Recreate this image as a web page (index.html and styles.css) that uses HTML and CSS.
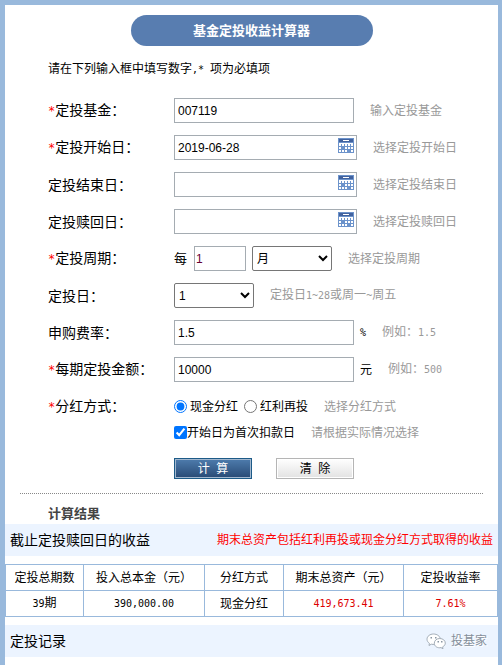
FILE: index.html
```
<!DOCTYPE html>
<html lang="zh-CN">
<head>
    <meta charset="UTF-8">
    <meta name="viewport" content="width=device-width, initial-scale=1.0">
    <title>基金定投收益计算器</title>
    <link rel="stylesheet" href="styles.css">
</head>
<body>
<svg class="sprite" aria-hidden="true">
    <symbol id="calendar" viewBox="0 0 16 15">
        <path fill="#6c93cb" d="M0 0h16v15H0z"/>
        <path fill="#41629f" d="M1 1h14v3H1z"/>
        <path fill="#fff" d="M5 2h6v1H5zM1 5h14v1H1zM1 6h2v2H1zM4 6h2v2H4zM7 6h2v2H7zM10 6h2v2h-2zM13 6h2v2h-2zM1 9h2v2H1zM7 9h2v2H7zM10 9h2v2h-2zM13 9h2v2h-2zM1 12h2v2H1zM4 12h2v2H4zM7 12h2v2H7zM13 12h2v2h-2z"/>
    </symbol>
</svg>
<div class="container">
    <h1>基金定投收益计算器</h1>
    <form id="calcForm">
        <p class="intro">请在下列输入框中填写数字<span class="num">,*&nbsp;</span>项为必填项</p>
        <div class="form-group">
            <label class="name" for="fund"><span class="star">*</span>定投基金：</label>
            <input type="text" id="fund" class="text" value="007119">
            <span class="hint">输入定投基金</span>
        </div>
        <div class="form-group">
            <label class="name" for="start"><span class="star">*</span>定投开始日：</label>
            <div class="date">
                <input type="text" id="start" class="text" value="2019-06-28">
                <button type="button" class="pick" aria-label="选择日期"><svg><use href="#calendar"/></svg></button>
            </div>
            <span class="hint">选择定投开始日</span>
        </div>
        <div class="form-group">
            <label class="name" for="end">定投结束日：</label>
            <div class="date">
                <input type="text" id="end" class="text">
                <button type="button" class="pick" aria-label="选择日期"><svg><use href="#calendar"/></svg></button>
            </div>
            <span class="hint">选择定投结束日</span>
        </div>
        <div class="form-group">
            <label class="name" for="redeem">定投赎回日：</label>
            <div class="date">
                <input type="text" id="redeem" class="text">
                <button type="button" class="pick" aria-label="选择日期"><svg><use href="#calendar"/></svg></button>
            </div>
            <span class="hint">选择定投赎回日</span>
        </div>
        <div class="form-group">
            <label class="name" for="cycle"><span class="star">*</span>定投周期：</label>
            <span class="every">每</span>
            <input type="text" id="cycle" class="text short" value="1">
            <select aria-label="周期单位">
                <option>月</option>
                <option>周</option>
            </select>
            <span class="hint">选择定投周期</span>
        </div>
        <div class="form-group">
            <label class="name" for="day">定投日：</label>
            <select id="day">
                <option>1</option>
                <option>2</option>
                <option>3</option>
            </select>
            <span class="hint">定投日<span class="num">1~28</span>或周一<span class="num">~</span>周五</span>
        </div>
        <div class="form-group">
            <label class="name" for="rate">申购费率：</label>
            <input type="text" id="rate" class="text" value="1.5">
            <span class="unit num">%</span>
            <span class="hint">例如：<span class="num">1.5</span></span>
        </div>
        <div class="form-group">
            <label class="name" for="amount"><span class="star">*</span>每期定投金额：</label>
            <input type="text" id="amount" class="text" value="10000">
            <span class="unit">元</span>
            <span class="hint">例如：<span class="num">500</span></span>
        </div>
        <div class="form-group">
            <span class="name"><span class="star">*</span>分红方式：</span>
            <label class="radio"><input type="radio" name="bonus" checked>现金分红</label>
            <label class="radio"><input type="radio" name="bonus">红利再投</label>
            <span class="hint">选择分红方式</span>
        </div>
        <div class="form-group check-row">
            <label class="check"><input type="checkbox" checked>开始日为首次扣款日</label>
            <span class="hint">请根据实际情况选择</span>
        </div>
        <div class="button-group">
            <button type="submit" class="btn primary">计&nbsp; 算</button>
            <button type="reset" class="btn">清&nbsp; 除</button>
        </div>
    </form>

    <h2>计算结果</h2>
    <div class="band">
        <h3>截止定投赎回日的收益</h3>
        <span class="note">期末总资产包括红利再投或现金分红方式取得的收益</span>
    </div>
    <table>
        <colgroup>
            <col class="col-count">
            <col class="col-cost">
            <col class="col-type">
            <col class="col-total">
            <col>
        </colgroup>
        <thead>
        <tr>
            <th>定投总期数</th>
            <th>投入总本金（元）</th>
            <th>分红方式</th>
            <th>期末总资产（元）</th>
            <th>定投收益率</th>
        </tr>
        </thead>
        <tbody>
        <tr>
            <td><span class="num">39</span>期</td>
            <td><span class="num">390,000.00</span></td>
            <td>现金分红</td>
            <td class="red"><span class="num">419,673.41</span></td>
            <td class="red"><span class="num">7.61%</span></td>
        </tr>
        </tbody>
    </table>
    <div class="band">
        <h3>定投记录</h3>
        <div class="brand">
            <svg viewBox="0 0 20 17" aria-hidden="true">
                <path fill="#fff" stroke="#a3adb8" d="M7.500 1C3.900 1 1 3.300 1 6.200c0 1.700.9 3.100 2.400 4.100L3 12.500l2.300-1.300c4.900 1.100 9-1.300 9-5C14.300 3.300 11.100 1 7.500 1z"/>
                <path fill="#fff" stroke="#a3adb8" d="M13.800 5.500c-3.100 0-5.500 2-5.500 4.700 0 3.200 3.300 5.200 6.700 4.400l2 1.200-.4-1.900c1.700-.9 2.700-2.200 2.700-3.800 0-2.600-2.500-4.600-5.500-4.600z"/>
                <path fill="#8b97a4" d="M4.500 4h1.500v1.500H4.500zM9 4h1.500v1.500H9zM11.500 8H13v1.500h-1.500zM15 8h1.500v1.500H15z"/>
            </svg>
            <span>投基家</span>
        </div>
    </div>
</div>

<script>
    document.getElementById('calcForm').addEventListener('submit', function (e) {
        e.preventDefault();
    });
</script>
</body>
</html>
```
FILE: styles.css
```
:root {
    --frame-color: #99b9dc;
    --title-color: #587db0;
    --band-color: #ecf4ff;
    --hint-color: #999;
    --field-border: #a5acb2;
}

* {
    box-sizing: border-box;
}

body {
    margin: 0;
    font-family: "Liberation Sans", "Noto Sans CJK SC", sans-serif;
    font-size: 12px;
    line-height: 16px;
    color: #000;
    background-color: #fff;
}

.sprite {
    display: none;
}

.container {
    min-height: 100vh;
    padding-top: 10px;
    border: solid var(--frame-color);
    border-width: 5px 4px 0 5px;
}

h1 {
    width: 242px;
    margin: 0 auto;
    font-size: 13px;
    line-height: 31px;
    text-align: center;
    color: #fff;
    background-color: var(--title-color);
    border-radius: 16px;
}

form {
    display: flex;
    flex-direction: column;
    gap: 12px;
    margin: 0 15px;
    padding: 15px 0 14px 28px;
    border-bottom: 1px dotted #888;
}

.intro {
    margin: 0 0 8px;
}

.num {
    font-family: "DejaVu Sans Mono", monospace;
    font-size: 10px;
}

.form-group {
    display: flex;
    align-items: center;
    height: 25px;
    white-space: nowrap;
}

.name {
    width: 126px;
    font-size: 14px;
}

.star {
    font-family: "DejaVu Sans Mono", monospace;
    font-size: 12px;
    color: #f00;
}

.text {
    width: 180px;
    height: 25px;
    padding: 0 3px;
    font-family: "Liberation Sans", sans-serif;
    font-size: 12px;
    border: 1px solid var(--field-border);
}

.date {
    position: relative;
}

.date .text {
    display: block;
    width: 183px;
    padding-right: 20px;
}

.pick {
    position: absolute;
    top: 3px;
    right: 3px;
    width: 16px;
    height: 15px;
    padding: 0;
    border: none;
    background: none;
    cursor: pointer;
}

.pick svg {
    display: block;
    width: 16px;
    height: 15px;
    shape-rendering: crispEdges;
}

.every {
    width: 20px;
    font-size: 13px;
}

.text.short {
    width: 52px;
    margin-right: 6px;
    padding: 0 1px;
    color: #603;
}

select {
    width: 80px;
    height: 25px;
    padding: 0;
    font-family: "Liberation Sans", "Noto Sans CJK SC", sans-serif;
    font-size: 12px;
    color: #000;
    background-color: #fff;
    border: 1px solid #767676;
    border-radius: 2px;
}

.hint {
    margin-left: 16px;
    color: var(--hint-color);
}

.unit {
    margin-left: 6px;
}

.radio,
.check {
    display: flex;
    align-items: center;
}

.radio input {
    width: 13px;
    height: 13px;
    margin: 0 3px 0 0;
}

.radio + .radio {
    margin-left: 6px;
}

.check input {
    width: 13px;
    height: 13px;
    margin: 0;
}

.check-row {
    height: 13px;
    margin-left: 126px;
    margin-top: -5px;
}

.button-group {
    display: flex;
    gap: 24px;
    margin: 7px 0 0 126px;
}

.btn {
    width: 78px;
    height: 21px;
    padding: 0;
    font-family: "Liberation Sans", "Noto Sans CJK SC", sans-serif;
    font-size: 12px;
    line-height: 16px;
    color: #000;
    background: linear-gradient(#fff, #e2e2e2);
    border: 1px solid #b5b5b5;
    box-shadow: inset 0 0 0 1px #fff;
    cursor: pointer;
}

.btn.primary {
    color: #fff;
    background: linear-gradient(#4e7cad, #284a75);
    border-color: #1d5b88;
    box-shadow: inset 0 0 0 1px #a3b8cf;
}

h2 {
    margin: 0;
    padding: 10px 0 0 43px;
    font-size: 13px;
    line-height: 20px;
    color: #444;
}

.band {
    display: flex;
    align-items: center;
    justify-content: space-between;
    height: 32px;
    padding: 0 5px;
    white-space: nowrap;
    background-color: var(--band-color);
}

h3 {
    margin: 0;
    font-size: 14px;
    font-weight: normal;
}

.note {
    color: #f00;
}

table {
    width: 100%;
    margin: 8px 0;
    table-layout: fixed;
    border-collapse: collapse;
}

.col-count {
    width: 78px;
}

.col-cost {
    width: 121px;
}

.col-type {
    width: 79px;
}

.col-total {
    width: 120px;
}

th,
td {
    height: 26px;
    padding: 0;
    font-weight: normal;
    text-align: center;
    white-space: nowrap;
    border: 1px solid var(--frame-color);
}

.red {
    color: #d00;
}

.brand {
    display: flex;
    align-items: center;
    gap: 5px;
    padding-right: 6px;
    color: #858f9b;
    text-shadow: 1px 1px 0 #fff;
}

.brand svg {
    width: 20px;
    height: 17px;
}
```
